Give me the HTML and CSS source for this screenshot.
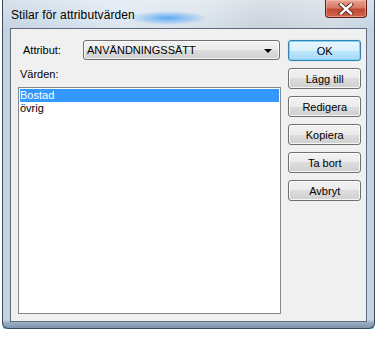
FILE: index.html
```html
<!DOCTYPE html>
<html>
<head>
<title>Stilar för attributvärden</title>
<link rel="stylesheet" href="styles.css">
</head>
<body>
<div class="window">
  <div class="titlebar">
    <span class="title">Stilar för attributvärden</span>
    <div class="close">
      <svg width="16" height="12" viewBox="0 0 16 12">
        <path d="M3 1.5 L13 10.5 M13 1.5 L3 10.5" stroke="#5a2418" stroke-width="4.2" stroke-linecap="square"/>
        <path d="M3 1.5 L13 10.5 M13 1.5 L3 10.5" stroke="#ffffff" stroke-width="2.4" stroke-linecap="square"/>
      </svg>
    </div>
  </div>
  <div class="client">
    <div class="main">
      <div class="attr-row">
        <label class="attr-label">Attribut:</label>
        <div class="combo">
          <span>ANVÄNDNINGSSÄTT</span>
          <span class="arrow"></span>
        </div>
      </div>
      <div class="values-label">Värden:</div>
      <div class="listbox">
        <div class="item selected">Bostad</div>
        <div class="item">övrig</div>
      </div>
    </div>
    <div class="buttons">
      <button class="btn default">OK</button>
      <button class="btn">Lägg till</button>
      <button class="btn">Redigera</button>
      <button class="btn">Kopiera</button>
      <button class="btn">Ta bort</button>
      <button class="btn">Avbryt</button>
    </div>
  </div>
</div>
</body>
</html>
```

FILE: styles.css
```css
body {
margin: 0;
padding: 0;
background-color: #ffffff;
font-family: "Liberation Sans", Arial, sans-serif;
font-size: 11px;
color: #000;
}
.window {
margin-left: 2px;
width: 373px;
height: 329px;
box-sizing: border-box;
padding: 0 7px 6px 7px;
display: flex;
flex-direction: column;
border: 1px solid #3a4a5c;
border-top: none;
border-radius: 0 0 6px 6px;
box-shadow: 0 1px 0 #2bc4ee;
background:
linear-gradient(to bottom, rgba(120,145,172,0) 0, rgba(120,145,172,0) 320px, #9fb2c6 322px, #7d93ab 328px),
radial-gradient(ellipse 40px 7px at 165px 18px, rgba(70,160,245,0.85), rgba(70,160,245,0) 100%),
linear-gradient(to bottom, rgba(255,255,255,0.35) 0, rgba(255,255,255,0) 30px),
linear-gradient(to right, #c3d2e2 0, #dbe5f0 120px, #d6e0ea 200px, #c7d0da 260px, #d0d9e3 330px, #c3d3e4 100%);
}
.titlebar {
height: 28px;
display: flex;
justify-content: space-between;
align-items: flex-start;
}
.title {
font-size: 12px;
margin-top: 8px;
margin-left: 1px;
color: #000;
letter-spacing: 0.1px;
}
.close {
width: 42px;
height: 18px;
box-sizing: border-box;
border: 1px solid #5e1e14;
border-top: none;
border-radius: 0 0 4px 4px;
background: linear-gradient(to bottom, #e8a493 0, #d47a66 45%, #c24a32 55%, #d0654b 100%);
box-shadow: inset 0 0 0 1px rgba(255,200,190,0.5);
display: flex;
align-items: center;
justify-content: center;
}
.client {
flex: 1;
background-color: #f0f0f0;
border: 1px solid #5d6b7c;
display: flex;
padding: 11px 5px 7px 7px;
gap: 7px;
}
.main {
width: 265px;
display: flex;
flex-direction: column;
}
.attr-row {
display: flex;
align-items: center;
height: 20px;
}
.attr-label {
width: 60px;
padding-left: 5px;
}
.combo {
width: 197px;
height: 20px;
box-sizing: border-box;
border: 1px solid #707070;
border-radius: 3px;
background: linear-gradient(to bottom, #f2f2f2 0, #ebebeb 50%, #dddddd 50%, #cfcfcf 100%);
box-shadow: inset 0 0 0 1px rgba(255,255,255,0.7);
display: flex;
align-items: center;
justify-content: space-between;
padding: 0 7px 0 3px;
}
.arrow {
width: 0;
height: 0;
border-left: 4px solid transparent;
border-right: 4px solid transparent;
border-top: 4px solid #000;
margin-top: 1px;
}
.values-label {
padding-left: 2px;
margin-top: 8px;
height: 19px;
}
.listbox {
flex: 1;
background: #fff;
border: 1px solid #828790;
padding: 1px;
}
.item {
height: 13px;
line-height: 13px;
padding-left: 0;
}
.item.selected {
background: #3399ff;
color: #fff;
}
.buttons {
width: 73px;
display: flex;
flex-direction: column;
gap: 7px;
}
.btn {
height: 21px;
font-family: "Liberation Sans", Arial, sans-serif;
font-size: 11px;
border: 1px solid #707070;
border-radius: 3px;
background: linear-gradient(to bottom, #f2f2f2 0, #ebebeb 50%, #dddddd 50%, #cfcfcf 100%);
box-shadow: inset 0 0 0 1px rgba(255,255,255,0.8);
padding: 0;
color: #000;
}
.btn.default {
border-color: #3c7fb1;
background: linear-gradient(to bottom, #eaf6fd 0, #d9f0fc 50%, #bee6fd 50%, #a7d9f5 100%);
box-shadow: inset 0 0 0 1px #7ad4f5, 0 0 1px #48c0f0;
}
```
